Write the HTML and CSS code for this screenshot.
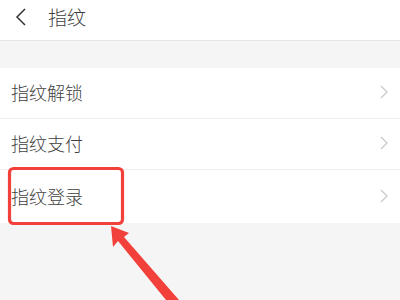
FILE: index.html
```html
<!DOCTYPE html>
<html lang="zh">
<head>
<meta charset="utf-8">
<link rel="stylesheet" href="styles.css">
</head>
<body>
<div class="page">
  <header class="topbar">
    <svg class="back" width="14" height="20" viewBox="0 0 14 20"><path d="M11 2 L3 10 L11 18" fill="none" stroke="#333" stroke-width="1.5"/></svg>
    <span class="title">指纹</span>
  </header>
  <div class="gap"></div>
  <ul class="list">
    <li class="row"><span>指纹解锁</span><svg class="chev" width="8" height="14" viewBox="0 0 8 14"><path d="M1 1 L7 7 L1 13" fill="none" stroke="#c8c8c8" stroke-width="1.3"/></svg></li>
    <li class="row"><span>指纹支付</span><svg class="chev" width="8" height="14" viewBox="0 0 8 14"><path d="M1 1 L7 7 L1 13" fill="none" stroke="#c8c8c8" stroke-width="1.3"/></svg></li>
    <li class="row"><span>指纹登录</span><svg class="chev" width="8" height="14" viewBox="0 0 8 14"><path d="M1 1 L7 7 L1 13" fill="none" stroke="#c8c8c8" stroke-width="1.3"/></svg></li>
  </ul>
  <svg class="annot" width="400" height="300" viewBox="0 0 400 300">
    <rect x="9.5" y="168.5" width="113" height="55" rx="4" fill="none" stroke="#f2413b" stroke-width="3.2"/>
    <polygon points="111,226 129,233 124,237 179,300 166,300 118,241 113,247" fill="#f2413b"/>
  </svg>
</div>
</body>
</html>
```
FILE: styles.css
```css
html, body {
  margin: 0;
  padding: 0;
  background: #f5f5f5;
}
.page {
  position: relative;
  width: 400px;
  height: 300px;
  overflow: hidden;
  font-family: "Noto Sans CJK SC", "Noto Sans", sans-serif;
  font-weight: 300;
  color: #404040;
}
.topbar {
  height: 40px;
  background: #fff;
  border-bottom: 1px solid #e6e6e6;
  display: flex;
  align-items: center;
  padding-left: 14px;
}
.back {
  display: block;
  margin-top: -6px;
}
.title {
  margin-left: 20px;
  font-size: 19px;
  line-height: 1;
  margin-top: -7px;
}
.gap {
  height: 27px;
}
.list {
  list-style: none;
  margin: 0;
  padding: 0;
  background: #fff;
}
.row {
  height: 51px;
  border-bottom: 1px solid #f0f0f0;
  display: flex;
  align-items: center;
  justify-content: space-between;
  padding: 0 12px 2px 11px;
  box-sizing: border-box;
  font-size: 18px;
}
.row:last-child {
  border-bottom: none;
  height: 53px;
}
.chev {
  display: block;
}
.annot {
  position: absolute;
  left: 0;
  top: 0;
}
```
